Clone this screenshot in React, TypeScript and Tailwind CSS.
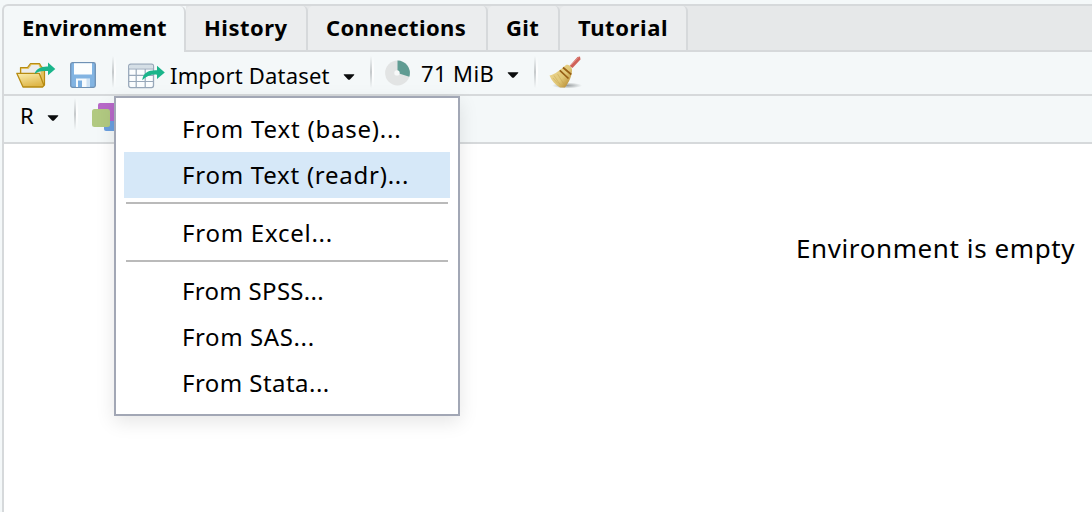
import type { ReactNode } from "react";

const tabs = [
  { label: "History", cls: "w-[122px] tracking-[0.5px]" },
  { label: "Connections", cls: "w-[180px] tracking-[0.35px]" },
  { label: "Git", cls: "w-[72px] tracking-[0.4px]" },
  { label: "Tutorial", cls: "w-[128px] tracking-[0.6px]" },
];

function Caret({ className }: { className: string }) {
  return (
    <svg className={`shrink-0 ${className}`} width="12" height="6" viewBox="0 0 12 6">
      <path d="M.8.2h10.4v.9L6.7 5.8H5.3L.8 1.1z" fill="#0a0c0d" />
    </svg>
  );
}

function Divider({ className }: { className: string }) {
  return (
    <div className={`flex h-[32px] w-[4px] shrink-0 ${className}`}>
      <div className="w-[2px] bg-linear-to-b from-transparent via-[#c5c9cb] to-transparent" />
      <div className="w-[2px] bg-linear-to-b from-transparent via-white to-transparent" />
    </div>
  );
}

function FolderIcon() {
  return (
    <svg className="mt-[4px] ml-[12px] shrink-0" width="40" height="28" viewBox="0 0 40 28">
      <defs>
        <linearGradient id="folder" x1="0" y1="0" x2="0.4" y2="1">
          <stop offset="0" stopColor="#fbefb0" />
          <stop offset="1" stopColor="#dfb74a" />
        </linearGradient>
      </defs>
      <path d="M4.5 12V6.500h7l3-4h9l2 3.500 3 1V24l-3 1.500z" fill="#e2c15e" stroke="#b78b12" strokeWidth="1.2" strokeLinejoin="round" />
      <path d="M5.500 12V8h7l3-4h7l2 4v6H6z" fill="#ebecec" />
      <path d="M.8 12.300h22.400L28 24.500 26.500 26H7z" fill="url(#folder)" stroke="#b78b12" strokeWidth="1.3" strokeLinejoin="round" />
      <path d="M18.500 13C20 8 25 5.200 32 5.500V1.500l7.300 6.400-7.300 6.400v-4.200C26 9.500 22 10 18.500 13z" fill="#1ab58b" />
    </svg>
  );
}

function SaveIcon() {
  return (
    <svg className="mt-[4px] ml-[14px] shrink-0" width="26" height="26" viewBox="0 0 26 26">
      <rect x=".7" y=".7" width="24.6" height="24.6" rx="1.8" fill="#82b4e2" stroke="#6f91b4" strokeWidth="1.3" />
      <path d="M4 1.200h18V12.500H4z" fill="#fcfefe" />
      <path d="M6 16.500h14V25H6z" fill="#f7fbfd" />
      <path d="M8 18.500h4V25H8z" fill="#79aee0" />
      <path d="M16.500 16.500H20V25h-3.500z" fill="#82b4e2" opacity=".35" />
    </svg>
  );
}

function TableIcon() {
  return (
    <svg className="mt-[6px] ml-[12px] shrink-0" width="38" height="26" viewBox="0 0 38 26">
      <rect x=".7" y="1.200" width="24.800" height="23.400" rx="2" fill="#fbfdfe" stroke="#98a8ba" strokeWidth="1.3" />
      <path d="M1.400 3q0-1 1-1h21.400q1 0 1 1v2.600H1.400z" fill="#d5dfe6" />
      <path d="M1 6h24M1 12.300h24M1 18.500h24M8.200 6v18M17.200 6v18" stroke="#98a8ba" strokeWidth="1.2" />
      <path d="M14.300 17.200C15 10 20 7 29 7.300V2.800L36.800 9.500 29 16v-4.300c-6-.5-10.500 1.300-14.700 5.500z" fill="#1ab58b" />
    </svg>
  );
}

function MemoryIcon() {
  return (
    <svg className="ml-[11px] shrink-0" width="26" height="26" viewBox="0 0 26 26">
      <circle cx="12.500" cy="13" r="12.400" fill="#e2e4e4" />
      <path d="M12.500 13V.600a12.400 12.400 0 0 1 11.800 16.200z" fill="#609c93" />
      <circle cx="12" cy="12.900" r="2.700" fill="#f7f9f9" />
    </svg>
  );
}

function BroomIcon() {
  return (
    <svg className="ml-[11px] shrink-0" width="34" height="34" viewBox="0 0 34 34">
      <defs>
        <linearGradient id="straw" x1="0.1" y1="0.4" x2="0.8" y2="1">
          <stop offset="0" stopColor="#e9d28a" />
          <stop offset="0.5" stopColor="#e0c776" />
          <stop offset="1" stopColor="#b98d34" />
        </linearGradient>
        <radialGradient id="floor">
          <stop offset="0" stopColor="#858b8d" stopOpacity=".85" />
          <stop offset="1" stopColor="#858b8d" stopOpacity="0" />
        </radialGradient>
      </defs>
      <ellipse cx="18" cy="29.500" rx="15" ry="3" fill="url(#floor)" />
      <path d="M20.500 10 28.500 1 31 .500 31.500 3.500 23.500 12z" fill="#cf6259" />
      <path d="m21.500 9.500 8-8.300" stroke="#e39088" strokeWidth="1" />
      <path d="M17 9c2-.7 5.500 1.300 6 4.500.2 5.200-2.500 12.500-7 18h-5C6.500 29 2.500 24.500.500 19.500 6 18.500 11.500 13.500 17 9z" fill="url(#straw)" />
      <path d="m5 19.500 6 9M8.500 18l6 9.500M4 22l5 5.500" stroke="#bd9848" strokeWidth=".7" opacity=".5" />
      <path d="m14 11.500 8.300 7M10.800 14.300l8.700 8.200" stroke="#965f15" strokeWidth="1.7" />
    </svg>
  );
}

function ObjectsIcon() {
  return (
    <svg className="mb-[5px] ml-[14px] shrink-0" width="32" height="30" viewBox="0 0 32 30">
      <rect x="12" y="11" width="18" height="18" rx="2" fill="#6a9fe0" />
      <rect x="6" y="1" width="18" height="18" rx="2" fill="#b768c8" />
      <rect x="0" y="7" width="18" height="18" rx="2.500" fill="#b1c981" />
    </svg>
  );
}

function Item({ children, className }: { children: ReactNode; className: string }) {
  return <div className={`flex h-[46px] items-center pl-[58px] ${className}`}>{children}</div>;
}

function ImportMenu() {
  return (
    <div className="absolute top-[96px] left-[114px] z-10 h-[320px] w-[346px] border-2 border-[#a2a7b5] bg-white p-[8px] text-[24px] shadow-[0_6px_18px_rgba(0,0,0,0.1)]">
      <Item className="tracking-[0.8px]">From Text (base)...</Item>
      <Item className="bg-[#d6e8f8] tracking-[0.75px]">From Text (readr)...</Item>
      <div className="mx-[2px] mt-[4px] mb-[6px] h-[2px] bg-[#bababa]" />
      <Item className="tracking-[0.75px]">From Excel...</Item>
      <div className="mx-[2px] mt-[4px] mb-[6px] h-[2px] bg-[#bababa]" />
      <Item className="tracking-[0.3px]">From SPSS...</Item>
      <Item className="tracking-[0.6px]">From SAS...</Item>
      <Item className="tracking-[0.45px]">From Stata...</Item>
    </div>
  );
}

export default function App() {
  return (
    <div className="relative h-[512px] w-[1092px] overflow-hidden bg-[#f4f8f9] pt-[4px] pl-[2px] font-['Noto_Sans',sans-serif] whitespace-pre text-black">
      <div className="flex h-[508px] flex-col rounded-tl-[6px] border-t-2 border-l-2 border-[#d6d9db] bg-[#f4f8f9]">
        <div className="flex h-[46px] shrink-0 text-[22px] leading-none font-bold">
          <div className="flex w-[182px] shrink-0 items-center rounded-tr-[6px] border-r-2 border-[#d6d9db] pb-[5px] pl-[18px] tracking-[0.300px]">
            Environment
          </div>
          <div className="flex flex-1 border-b-2 border-[#d6d9db] bg-[#e6e8e9]">
            {tabs.map((tab) => (
              <div
                key={tab.label}
                className={`flex shrink-0 items-center rounded-t-[5px] border-r-2 border-[#d6d9db] bg-[#ebedee] pb-[3px] pl-[18px] ${tab.cls}`}
              >
                {tab.label}
              </div>
            ))}
          </div>
        </div>

        <div className="flex h-[44px] shrink-0 items-center border-b-2 border-[#d6d9db] text-[22px] leading-none">
          <FolderIcon />
          <SaveIcon />
          <Divider className="mb-[2px] ml-[16px]" />
          <TableIcon />
          <span className="mt-[3px] ml-[4px] w-[161px] tracking-[0.170px]">Import Dataset</span>
          <Caret className="mt-[8px] ml-[12px]" />
          <Divider className="mb-[2px] ml-[15px]" />
          <MemoryIcon />
          <span className="mb-[1px] ml-[10px] w-[74px] tracking-[0.400px]">71 MiB</span>
          <Caret className="mt-[4px] ml-[12px]" />
          <Divider className="mb-[2px] ml-[15px]" />
          <BroomIcon />
        </div>

        <div className="flex h-[48px] shrink-0 items-center border-b-2 border-[#d6d9db] text-[22px] leading-none">
          <span className="mb-[8px] ml-[16px] w-[15px]">R</span>
          <Caret className="mb-[3px] ml-[12px]" />
          <Divider className="mb-[10px] ml-[15px]" />
          <ObjectsIcon />
        </div>

        <div className="flex-1 bg-white pt-[84px] pl-[792px] text-[26px] leading-[40px] tracking-[0.600px]">
          Environment is empty
        </div>
      </div>
      <ImportMenu />
    </div>
  );
}
